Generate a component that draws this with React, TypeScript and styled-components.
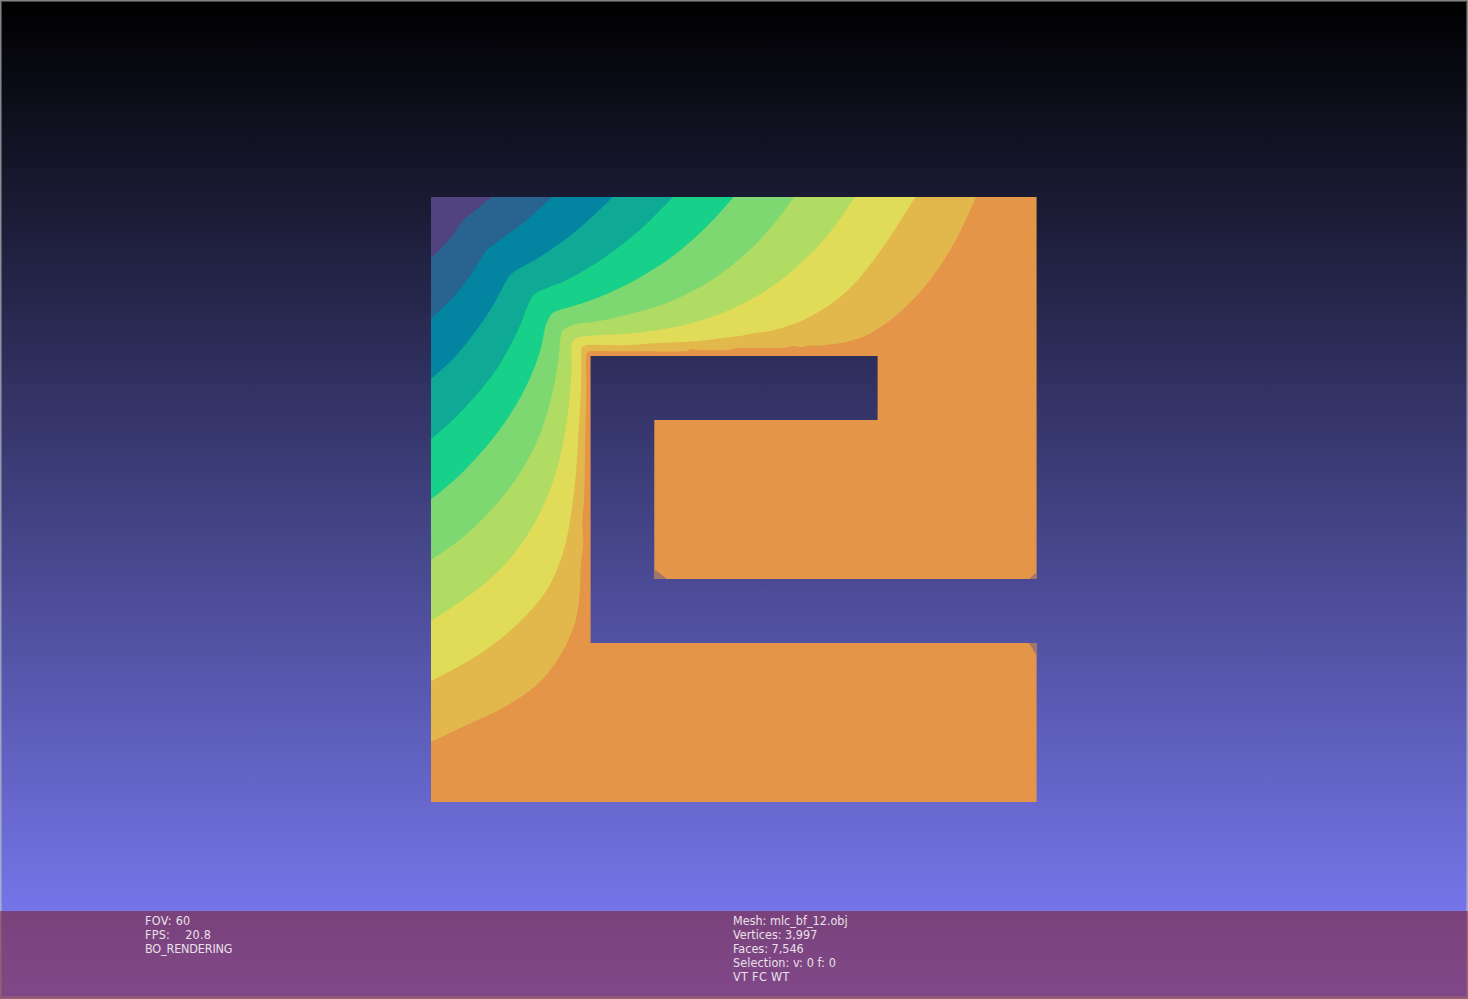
import React from 'react';
import styled, { createGlobalStyle } from 'styled-components';

const GlobalStyle = createGlobalStyle`
  html, body { margin: 0; padding: 0; background: #000; }
  body { overflow: hidden; }
`;

const Viewport = styled.main`
  position: relative;
  display: flex;
  flex-direction: column;
  width: 1468px;
  height: 999px;
  background: linear-gradient(to bottom, rgb(0, 0, 0), rgb(128, 128, 255));
`;

const Scene = styled.section`
  flex: 1;
  min-height: 0;
  padding: 197px 0 0 431px;
  box-sizing: border-box;
`;

const MeshDrawing = styled.svg`
  display: block;
`;

const LogArea = styled.footer`
  position: relative;
  z-index: 1;
  display: grid;
  grid-template-columns: 588px 1fr;
  height: 88px;
  padding: 3px 0 0 145px;
  box-sizing: border-box;
  background: rgba(128, 16, 16, 0.5);
`;

const LogColumn = styled.div`
  display: flex;
  flex-direction: column;
`;

const LogLine = styled.div<{ $spacing?: number }>`
  height: 14px;
  font: 12.5px/14px 'DejaVu Sans Condensed', 'DejaVu Sans', sans-serif;
  font-stretch: condensed;
  letter-spacing: ${(p) => p.$spacing ?? 0}px;
  color: #e9e0e9;
  white-space: pre;
`;

const Frame = styled.div`
  position: absolute;
  inset: 0;
  border: 1px solid rgba(200, 200, 200, 0.65);
  box-shadow: inset 0 0 0 1px rgba(200, 200, 200, 0.35), inset 0 -2px 0 rgba(200, 200, 200, 0.3);
  box-sizing: border-box;
  pointer-events: none;
`;

type Point = [number, number];

interface Band {
  color: string;
  edge: Point[];
}

// Distance bands, from the farthest to the one around the source corner.
const bands: Band[] = [
  {
    color: '#e2b84d',
    edge: [[976, 197], [956.7, 238.3], [935, 273.3], [901.7, 310.7], [865, 336], [845, 342.3], [825, 345], [816.7, 345.7], [810, 345.3], [801.7, 347], [793, 346], [785, 347.7], [765, 347.9], [735, 348.3], [730, 349.7], [698, 350], [691.7, 349.2], [686.7, 351], [625, 351.3], [588.5, 351.5], [586.3, 354], [586.3, 390], [585, 450], [584, 500], [582.3, 523], [583.3, 541.7], [580.6, 566.7], [580, 590], [575.7, 620], [565, 646.7], [540, 681.7], [505, 706.7], [468.3, 724.3], [431, 742]],
  },
  {
    color: '#e1dc57',
    edge: [[915.3, 197], [896.7, 226.7], [875, 258.3], [850, 288.3], [825, 308], [801.7, 320.7], [768.3, 331.3], [755, 333], [741.7, 335.7], [725, 337.7], [698.3, 341], [658.3, 343], [625, 345.3], [585.7, 345.2], [581.7, 347.7], [581.4, 353.3], [581, 390], [578.7, 430], [576.2, 470], [571.7, 510], [563.3, 551.7], [546.7, 590], [518.3, 623.3], [481.7, 652.7], [431, 681]],
  },
  {
    color: '#b0dc64',
    edge: [[855, 197], [825, 238.5], [801.7, 262.5], [768.3, 289], [731.7, 309], [691.7, 323.3], [655, 330.5], [625, 334], [591.7, 335.7], [576.7, 338], [572.3, 342], [571.7, 370], [570.5, 386.7], [564.3, 436.7], [552.5, 483.3], [532.5, 526.7], [507.5, 561.7], [476.7, 590], [431, 620.7]],
  },
  {
    color: '#7ed872',
    edge: [[794.3, 197], [771.7, 226.7], [745, 254.3], [711.7, 280], [671.7, 301], [625, 315.3], [598.3, 321.3], [571.7, 325.3], [563, 330.7], [558.3, 361.7], [553, 390], [539, 436.7], [520, 473], [491.7, 509.3], [461.7, 538.3], [431, 560]],
  },
  {
    color: '#17d18a',
    edge: [[733.7, 197], [705, 228.3], [671.7, 257], [645, 274.5], [625, 285.5], [591.7, 300], [556.7, 311], [552.3, 313.2], [546.7, 322.7], [540, 351.7], [524.3, 390], [504.7, 422.7], [480.7, 453], [455, 479.5], [431, 499.3]],
  },
  {
    color: '#0eaa95',
    edge: [[673, 197], [649, 221.5], [625, 242.3], [595, 264], [565, 280.7], [540, 291], [534.3, 294.3], [527.7, 305.7], [521.7, 321.7], [508.3, 349.3], [495, 371.5], [480, 390.5], [455, 418], [431, 439.3]],
  },
  {
    color: '#0384a0',
    edge: [[612.7, 197], [585, 223.3], [558.3, 244.5], [535, 260], [515, 271], [510, 275], [505, 283.3], [493.3, 305], [475, 332], [455, 356.7], [431, 379]],
  },
  {
    color: '#29638f',
    edge: [[552.3, 197], [521.7, 224], [491.7, 246], [486.7, 250], [481.7, 257.7], [468.3, 278.3], [451.7, 299], [431, 318.3]],
  },
  {
    color: '#50437f',
    edge: [[491.7, 197], [461, 222.7], [455, 231.7], [443.3, 246], [431, 257.7]],
  },
];

const outline =
  'M431 197H1036.6V579H654.3V420H877.6V356H590.6V643H1036.6V802H431Z';

const distance = (a: Point, b: Point) => Math.hypot(b[0] - a[0], b[1] - a[1]);

function bandPath(points: Point[]): string {
  // One handle per point, kept short where a neighbouring segment is short.
  const handles = points.map((p, i) => {
    const before = points[i - 1];
    const after = points[i + 1];
    if (!before || !after) return { x: 0, y: 0, limit: 0 };
    const l1 = distance(before, p);
    const l2 = distance(p, after);
    const x = ((p[0] - before[0]) / l1) * l2 + ((after[0] - p[0]) / l2) * l1;
    const y = ((p[1] - before[1]) / l1) * l2 + ((after[1] - p[1]) / l2) * l1;
    const size = Math.hypot(x, y) || 1;
    return { x: x / size, y: y / size, limit: Math.min(l1, l2) * 0.5 };
  });
  let d = `M431 197L${points[0].join(' ')}`;
  for (let i = 1; i < points.length; i++) {
    const a = points[i - 1];
    const b = points[i];
    const ha = handles[i - 1];
    const hb = handles[i];
    const third = distance(a, b) / 3;
    const la = Math.min(third, ha.limit);
    const lb = Math.min(third, hb.limit);
    d += `C${a[0] + ha.x * la} ${a[1] + ha.y * la} ${b[0] - hb.x * lb} ${b[1] - hb.y * lb} ${b[0]} ${b[1]}`;
  }
  return d + 'Z';
}

function Mesh() {
  return (
    <MeshDrawing width="606" height="605" viewBox="431 197 606 605">
      <defs>
        <clipPath id="mesh-outline">
          <path d={outline} />
        </clipPath>
      </defs>
      <path d={outline} fill="#e49548" />
      <g clipPath="url(#mesh-outline)">
        {bands.map((band) => (
          <path key={band.color} d={bandPath(band.edge)} fill={band.color} />
        ))}
        <path d="M654 569L667 579H654ZM1037 572L1029 579H1037ZM1029 643H1037V656Z" fill="#a0756a" />
      </g>
    </MeshDrawing>
  );
}

export default function App() {
  return (
    <>
      <GlobalStyle />
      <Viewport>
        <Scene>
          <Mesh />
        </Scene>
        <Frame />
        <LogArea>
          <LogColumn>
            <LogLine $spacing={0.3}>FOV: 60</LogLine>
            <LogLine $spacing={0.22}>{'FPS:    20.8'}</LogLine>
            <LogLine $spacing={-0.16}>BO_RENDERING</LogLine>
          </LogColumn>
          <LogColumn>
            <LogLine>Mesh: mlc_bf_12.obj</LogLine>
            <LogLine>Vertices: 3,997</LogLine>
            <LogLine>Faces: 7,546</LogLine>
            <LogLine $spacing={0.08}>Selection: v: 0 f: 0</LogLine>
            <LogLine $spacing={0.33}>VT FC WT</LogLine>
          </LogColumn>
        </LogArea>
      </Viewport>
    </>
  );
}
